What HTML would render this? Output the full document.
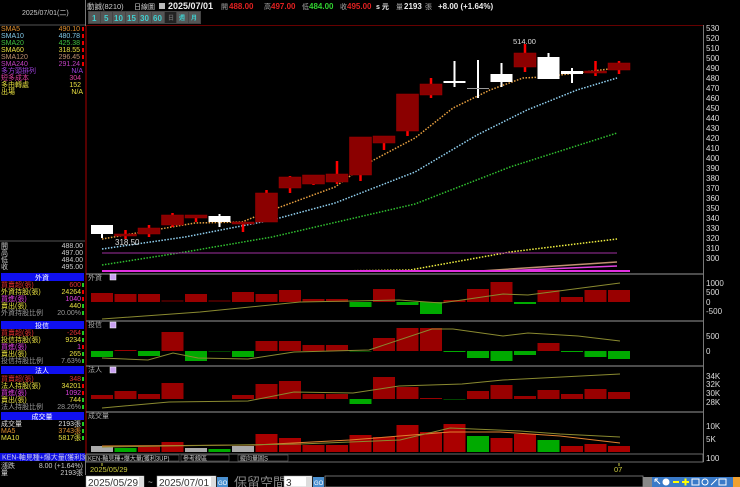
<!DOCTYPE html>
<html><head><meta charset="utf-8"><style>
html,body{margin:0;padding:0;background:#000;width:740px;height:487px;overflow:hidden}
svg{display:block}
text{font-family:"Liberation Sans","Noto Sans CJK TC",sans-serif}
.s{font-size:7px}
.ax{font-size:8px;fill:#ddd}
</style></head><body>
<svg width="740" height="487" viewBox="0 0 740 487" xmlns="http://www.w3.org/2000/svg">
<rect width="740" height="487" fill="#000"/>
<!-- left panel -->
<line x1="0" y1="25" x2="85" y2="25" stroke="#555"/>
<line x1="85.5" y1="0" x2="85.5" y2="475" stroke="#777"/>
<text x="22" y="15" class="s" fill="#ccc" font-family="Liberation Serif">2025/07/01(二)</text>
<g class="s">
<text x="1" y="31" fill="#e09030">SMA5</text><text x="80" y="31" fill="#e09030" text-anchor="end">490.10</text>
<text x="1" y="38" fill="#80c8e8">SMA10</text><text x="80" y="38" fill="#80c8e8" text-anchor="end">480.78</text>
<text x="1" y="45" fill="#40c040">SMA20</text><text x="80" y="45" fill="#40c040" text-anchor="end">425.38</text>
<text x="1" y="52" fill="#e8e040">SMA60</text><text x="80" y="52" fill="#e8e040" text-anchor="end">318.55</text>
<text x="1" y="59" fill="#c09070">SMA120</text><text x="80" y="59" fill="#c09070" text-anchor="end">296.45</text>
<text x="1" y="66" fill="#c040c0">SMA240</text><text x="80" y="66" fill="#c040c0" text-anchor="end">291.24</text>
<text x="1" y="73" fill="#a040e0">多方頭排列</text><text x="83" y="73" fill="#a040e0" text-anchor="end">N/A</text>
<text x="1" y="80" fill="#e040a0">短多成本</text><text x="81" y="80" fill="#e040a0" text-anchor="end">304</text>
<text x="1" y="87" fill="#e8e040">多由轉處</text><text x="81" y="87" fill="#e8e040" text-anchor="end">152</text>
<text x="1" y="94" fill="#e8e040">出場</text><text x="83" y="94" fill="#e8e040" text-anchor="end">N/A</text>
</g>
<g fill="#e00"><rect x="82" y="27" width="2" height="4"/><rect x="82" y="34" width="2" height="4"/><rect x="82" y="41" width="2" height="4"/><rect x="82" y="48" width="2" height="4"/><rect x="82" y="55" width="2" height="4"/><rect x="82" y="62" width="2" height="4"/></g>
<line x1="0" y1="241" x2="85" y2="241" stroke="#555"/>
<g class="s" fill="#ccc">
<text x="1" y="248">開</text><text x="83" y="248" text-anchor="end">488.00</text>
<text x="1" y="255">高</text><text x="83" y="255" text-anchor="end">497.00</text>
<text x="1" y="262">低</text><text x="83" y="262" text-anchor="end">484.00</text>
<text x="1" y="269">收</text><text x="83" y="269" text-anchor="end">495.00</text>
</g>
<g>
<rect x="1" y="273" width="83" height="8" fill="#1010f0"/><text x="42" y="280" class="s" fill="#fff" text-anchor="middle">外資</text>
<rect x="1" y="321" width="83" height="8" fill="#1010f0"/><text x="42" y="328" class="s" fill="#fff" text-anchor="middle">投信</text>
<rect x="1" y="366" width="83" height="8" fill="#1010f0"/><text x="42" y="373" class="s" fill="#fff" text-anchor="middle">法人</text>
<rect x="1" y="412" width="83" height="8" fill="#1010f0"/><text x="42" y="419" class="s" fill="#fff" text-anchor="middle">成交量</text>
</g>
<g class="s">
<text x="1" y="287" fill="#e03030">買賣超(張)</text><text x="81" y="287" fill="#e03030" text-anchor="end">600</text>
<text x="1" y="294" fill="#e8e040">外資持股(張)</text><text x="81" y="294" fill="#e8e040" text-anchor="end">24264</text>
<text x="1" y="301" fill="#e040e0">買進(張)</text><text x="81" y="301" fill="#e040e0" text-anchor="end">1040</text>
<text x="1" y="308" fill="#e8e040">賣出(張)</text><text x="81" y="308" fill="#e8e040" text-anchor="end">440</text>
<text x="1" y="315" fill="#999">外資持股比例</text><text x="81" y="315" fill="#999" text-anchor="end">20.00%</text>
<text x="1" y="335" fill="#e03030">買賣超(張)</text><text x="81" y="335" fill="#e03030" text-anchor="end">-264</text>
<text x="1" y="342" fill="#e8e040">投信持股(張)</text><text x="81" y="342" fill="#e8e040" text-anchor="end">9234</text>
<text x="1" y="349" fill="#e040e0">買進(張)</text><text x="81" y="349" fill="#e040e0" text-anchor="end">1</text>
<text x="1" y="356" fill="#e8e040">賣出(張)</text><text x="81" y="356" fill="#e8e040" text-anchor="end">265</text>
<text x="1" y="363" fill="#999">投信持股比例</text><text x="81" y="363" fill="#999" text-anchor="end">7.63%</text>
<text x="1" y="381" fill="#e03030">買賣超(張)</text><text x="81" y="381" fill="#e03030" text-anchor="end">348</text>
<text x="1" y="388" fill="#e8e040">法人持股(張)</text><text x="81" y="388" fill="#e8e040" text-anchor="end">34201</text>
<text x="1" y="395" fill="#e040e0">買進(張)</text><text x="81" y="395" fill="#e040e0" text-anchor="end">1092</text>
<text x="1" y="402" fill="#e8e040">賣出(張)</text><text x="81" y="402" fill="#e8e040" text-anchor="end">744</text>
<text x="1" y="409" fill="#999">法人持股比例</text><text x="81" y="409" fill="#999" text-anchor="end">28.26%</text>
<text x="1" y="426" fill="#ddd">成交量</text><text x="81" y="426" fill="#ddd" text-anchor="end">2193張</text>
<text x="1" y="433" fill="#e09030">MA5</text><text x="81" y="433" fill="#e09030" text-anchor="end">3743張</text>
<text x="1" y="440" fill="#e8e040">MA10</text><text x="81" y="440" fill="#e8e040" text-anchor="end">5817張</text>
</g>
<g fill="#2c2"><rect x="82" y="283" width="2" height="4"/><rect x="82" y="304" width="2" height="4"/><rect x="82" y="311" width="2" height="4"/><rect x="82" y="331" width="2" height="4"/><rect x="82" y="338" width="2" height="4"/><rect x="82" y="352" width="2" height="4"/><rect x="82" y="359" width="2" height="4"/><rect x="82" y="377" width="2" height="4"/><rect x="82" y="398" width="2" height="4"/><rect x="82" y="405" width="2" height="4"/><rect x="82" y="422" width="2" height="4"/><rect x="82" y="429" width="2" height="4"/><rect x="82" y="436" width="2" height="4"/></g>
<g fill="#e00"><rect x="82" y="290" width="2" height="4"/><rect x="82" y="297" width="2" height="4"/><rect x="82" y="345" width="2" height="4"/><rect x="82" y="384" width="2" height="4"/><rect x="82" y="391" width="2" height="4"/></g>
<rect x="0" y="453" width="85" height="8" fill="#1010e0"/>
<text x="2" y="459.5" class="s" fill="#cce">KEN-軸見種+爆大量(獲利3UP)</text>
<text x="1" y="468" class="s" fill="#ccc">漲跌</text><text x="83" y="468" class="s" fill="#ccc" text-anchor="end">8.00 (+1.64%)</text>
<text x="1" y="475" class="s" fill="#ccc">量</text><text x="83" y="475" class="s" fill="#ccc" text-anchor="end">2193張</text>

<!-- top bar -->
<g font-size="8" font-weight="bold">
<text x="87" y="9" fill="#ccc" font-weight="normal" font-size="7.5">動誠(8210)</text>
<text x="134" y="9" fill="#ccc" font-weight="normal" font-size="7">日線圖</text>
<rect x="159" y="3" width="6" height="6" fill="#bbb"/>
<text x="168" y="9" fill="#eee" font-size="9">2025/07/01</text>
<text x="221" y="9" fill="#aaa" font-weight="normal" font-size="7">開</text><text x="229" y="9" fill="#e02020">488.00</text>
<text x="264" y="9" fill="#aaa" font-weight="normal" font-size="7">高</text><text x="271" y="9" fill="#e02020">497.00</text>
<text x="302" y="9" fill="#aaa" font-weight="normal" font-size="7">低</text><text x="309" y="9" fill="#30d030">484.00</text>
<text x="340" y="9" fill="#aaa" font-weight="normal" font-size="7">收</text><text x="347" y="9" fill="#e02020">495.00</text>
<text x="376" y="9" fill="#eee" font-size="7">s 元</text>
<text x="396" y="9" fill="#aaa" font-weight="normal" font-size="7">量</text><text x="404" y="9" fill="#eee">2193</text>
<text x="425" y="9" fill="#aaa" font-weight="normal" font-size="7">張</text>
<text x="438" y="9" fill="#eee">+8.00 (+1.64%)</text>
</g>
<rect x="88" y="11" width="113" height="13" fill="#444"/>
<g font-size="8" font-weight="bold" fill="#40d0d0">
<rect x="89" y="12" width="11" height="11" fill="#555"/><text x="92" y="21">1</text>
<rect x="101" y="12" width="11" height="11" fill="#555"/><text x="104" y="21">5</text>
<rect x="113" y="12" width="12" height="11" fill="#555"/><text x="114" y="21">10</text>
<rect x="126" y="12" width="12" height="11" fill="#555"/><text x="127" y="21">15</text>
<rect x="139" y="12" width="12" height="11" fill="#555"/><text x="140" y="21">30</text>
<rect x="152" y="12" width="12" height="11" fill="#555"/><text x="153" y="21">60</text>
<rect x="165" y="12" width="11" height="11" fill="#222"/><text x="168" y="20" font-size="6" fill="#666">日</text>
<rect x="177" y="12" width="11" height="11" fill="#555"/><text x="179" y="20" font-size="6">週</text>
<rect x="189" y="12" width="11" height="11" fill="#555"/><text x="191" y="20" font-size="6">月</text>
</g>
<line x1="86" y1="25.5" x2="703" y2="25.5" stroke="#600" stroke-width="1"/>

<line x1="703.5" y1="25" x2="703.5" y2="462" stroke="#777"/>
<line x1="86" y1="26" x2="86" y2="455" stroke="#500" stroke-width="2"/>
<g stroke="#666" stroke-width="1.5">
<line x1="86" y1="274" x2="703" y2="274"/>
<line x1="86" y1="321" x2="703" y2="321"/>
<line x1="86" y1="366" x2="703" y2="366"/>
<line x1="86" y1="412" x2="703" y2="412"/>
</g>
<g class="ax">
<text x="706" y="31">530</text><text x="706" y="41">520</text><text x="706" y="51">510</text><text x="706" y="61">500</text><text x="706" y="71">490</text><text x="706" y="81">480</text><text x="706" y="91">470</text><text x="706" y="101">460</text><text x="706" y="111">450</text><text x="706" y="121">440</text><text x="706" y="131">430</text><text x="706" y="141">420</text><text x="706" y="151">410</text><text x="706" y="161">400</text><text x="706" y="171">390</text><text x="706" y="181">380</text><text x="706" y="191">370</text><text x="706" y="201">360</text><text x="706" y="211">350</text><text x="706" y="221">340</text><text x="706" y="231">330</text><text x="706" y="241">320</text><text x="706" y="251">310</text><text x="706" y="261">300</text>
<text x="706" y="286">1000</text><text x="706" y="295">500</text><text x="706" y="305">0</text><text x="706" y="314">-500</text>
<text x="706" y="339">500</text><text x="706" y="354">0</text>
<text x="706" y="379">34K</text><text x="706" y="387">32K</text><text x="706" y="396">30K</text><text x="706" y="405">28K</text>
<text x="706" y="429">10K</text><text x="706" y="442">5K</text>
<text x="706" y="461">100</text>
</g>

<g fill="none" stroke-width="1.5" stroke-dasharray="1.5 1.5">
<polyline stroke="#e8a040" points="102,239 195,223 242,222 272,210 335,187 368,163 415,138 453,108 490,90 523,78 543,77 577,73 617,68"/>
<polyline stroke="#90d0f0" points="102,249 185,237 272,220 335,203 415,172 477,135 527,110 577,90 617,78"/>
<polyline stroke="#30c030" points="102,265 185,252 272,237 415,204 510,167 617,133"/>
<polyline stroke="#f0f040" points="330,271 410,270 510,252 617,239"/>
</g>
<line x1="102" y1="253" x2="617" y2="253" stroke="#a030a0" stroke-width="1"/>
<polyline fill="none" stroke="#c09070" stroke-width="1.5" points="480,271 617,262"/>
<polyline fill="none" stroke="#e040e0" stroke-width="1.5" points="500,271 617,266"/>
<line x1="102" y1="271" x2="630" y2="271" stroke="#e030e0" stroke-width="2"/>

<g stroke="#f00" stroke-width="2.5">
<line x1="125.5" y1="230" x2="125.5" y2="239"/><line x1="149" y1="225" x2="149" y2="237"/><line x1="172.5" y1="213" x2="172.5" y2="227"/><line x1="196" y1="215" x2="196" y2="222"/><line x1="243" y1="222" x2="243" y2="232"/><line x1="266.5" y1="190" x2="266.5" y2="222"/><line x1="290" y1="176" x2="290" y2="193"/><line x1="313.5" y1="175" x2="313.5" y2="185"/><line x1="337" y1="161" x2="337" y2="184"/><line x1="360.5" y1="137" x2="360.5" y2="181"/><line x1="384" y1="136" x2="384" y2="150"/><line x1="407.5" y1="94" x2="407.5" y2="136"/><line x1="431" y1="78" x2="431" y2="98"/><line x1="525" y1="44" x2="525" y2="72"/><line x1="595.5" y1="61" x2="595.5" y2="76"/><line x1="619" y1="61" x2="619" y2="74"/>
</g>
<g fill="#8b0000" stroke="#a00000" stroke-width="0.5">
<rect x="114.5" y="234" width="22" height="2"/><rect x="138" y="228" width="22" height="6"/><rect x="161.5" y="215" width="22" height="10"/><rect x="185" y="215" width="22" height="3"/><rect x="232" y="222" width="22" height="2"/><rect x="255.5" y="193" width="22" height="29"/><rect x="279" y="177" width="22" height="11"/><rect x="302.5" y="175" width="22" height="9"/><rect x="326" y="174" width="22" height="8"/><rect x="349.5" y="137" width="22" height="38"/><rect x="373" y="136" width="22" height="7"/><rect x="396.5" y="94" width="22" height="37"/><rect x="420" y="84" width="22" height="11"/><rect x="514" y="53" width="22" height="14"/><rect x="584.5" y="71" width="22" height="2"/><rect x="608" y="63" width="22" height="7"/>
</g>
<g stroke="#fff" stroke-width="2">
<line x1="102" y1="225" x2="102" y2="238"/><line x1="219.5" y1="214" x2="219.5" y2="227"/><line x1="454.5" y1="61" x2="454.5" y2="87"/><line x1="478" y1="60" x2="478" y2="98"/><line x1="501.5" y1="63" x2="501.5" y2="87"/><line x1="548.5" y1="53" x2="548.5" y2="79"/><line x1="572" y1="68" x2="572" y2="83"/>
</g>
<g fill="#fff">
<rect x="91" y="225" width="22" height="9"/><rect x="208.5" y="216" width="22" height="6"/><rect x="443.5" y="81" width="22" height="2"/><rect x="467" y="88" width="22" height="1" fill="#999"/><rect x="490.5" y="74" width="22" height="8"/><rect x="537.5" y="57" width="22" height="22"/><rect x="561" y="71" width="22" height="3"/>
</g>
<text x="115" y="245" font-size="8" fill="#ddd" font-family="Liberation Serif">318.50</text>
<text x="513" y="44" font-size="7.5" fill="#ddd">514.00</text>

<g class="s" fill="#aaa">
<text x="88" y="280">外資</text><text x="88" y="327">投信</text><text x="88" y="372">法人</text><text x="88" y="418">成交量</text>
</g>
<g fill="#c8a0f0" stroke="#fff" stroke-width="0.5"><rect x="110" y="274" width="6" height="6"/><rect x="110" y="322" width="6" height="6"/><rect x="110" y="367" width="6" height="6"/></g>

<g fill="#900">
<rect x="91" y="293" width="22" height="9"/><rect x="114.5" y="294" width="22" height="8"/><rect x="138" y="294" width="22" height="8"/><rect x="161.5" y="300" width="22" height="2" fill="#400"/><rect x="185" y="294" width="22" height="8"/><rect x="208.5" y="300" width="22" height="2" fill="#400"/><rect x="232" y="292" width="22" height="10"/><rect x="255.5" y="294" width="22" height="8"/><rect x="279" y="290" width="22" height="12"/><rect x="302.5" y="299" width="22" height="3"/><rect x="326" y="299" width="22" height="3"/><rect x="373" y="289" width="22" height="13"/><rect x="443.5" y="300" width="22" height="2"/><rect x="467" y="289" width="22" height="13"/><rect x="490.5" y="282" width="22" height="20"/><rect x="537.5" y="290" width="22" height="12"/><rect x="561" y="297" width="22" height="5"/><rect x="584.5" y="290" width="22" height="12"/><rect x="608" y="290" width="22" height="12"/>
</g>
<g fill="#0a0"><rect x="349.5" y="302" width="22" height="5"/><rect x="396.5" y="302" width="22" height="3"/><rect x="420" y="302" width="22" height="12"/><rect x="514" y="302" width="22" height="2"/></g>
<polyline fill="none" stroke="#8a8a30" stroke-width="1" points="102,319 200,312 300,302 353,301 399,300 441,303 503,294 528,295 620,283"/>
<g fill="#900">
<rect x="114.5" y="350" width="22" height="1"/><rect x="161.5" y="332" width="22" height="19"/><rect x="255.5" y="341" width="22" height="10"/><rect x="279" y="341" width="22" height="10"/><rect x="302.5" y="345" width="22" height="6"/><rect x="326" y="345" width="22" height="6"/><rect x="373" y="338" width="22" height="13"/><rect x="396.5" y="328" width="22" height="23"/><rect x="420" y="328" width="22" height="23"/><rect x="537.5" y="343" width="22" height="8"/>
</g>
<g fill="#0a0">
<rect x="91" y="351" width="22" height="6"/><rect x="138" y="351" width="22" height="5"/><rect x="185" y="351" width="22" height="10"/><rect x="208.5" y="351" width="22" height="1" fill="#040"/><rect x="232" y="351" width="22" height="6"/><rect x="349.5" y="351" width="22" height="1" fill="#040"/><rect x="443.5" y="351" width="22" height="1"/><rect x="467" y="351" width="22" height="7"/><rect x="490.5" y="351" width="22" height="10"/><rect x="514" y="351" width="22" height="4"/><rect x="561" y="351" width="22" height="1"/><rect x="584.5" y="351" width="22" height="6"/><rect x="608" y="351" width="22" height="8"/>
</g>
<polyline fill="none" stroke="#8a8a30" stroke-width="1" points="102,358 148,360 173,353 198,358 248,359 294,352 369,350 432,329 453,329 503,336 528,333 578,336 620,341"/>
<g fill="#900">
<rect x="91" y="395" width="22" height="4"/><rect x="114.5" y="391" width="22" height="8"/><rect x="138" y="394" width="22" height="5"/><rect x="161.5" y="383" width="22" height="16"/><rect x="232" y="395" width="22" height="4"/><rect x="255.5" y="384" width="22" height="15"/><rect x="279" y="381" width="22" height="18"/><rect x="302.5" y="394" width="22" height="5"/><rect x="326" y="394" width="22" height="5"/><rect x="373" y="377" width="22" height="22"/><rect x="396.5" y="387" width="22" height="12"/><rect x="420" y="398" width="22" height="1"/><rect x="467" y="391" width="22" height="8"/><rect x="490.5" y="385" width="22" height="14"/><rect x="514" y="396" width="22" height="3"/><rect x="537.5" y="390" width="22" height="9"/><rect x="561" y="394" width="22" height="5"/><rect x="584.5" y="389" width="22" height="10"/><rect x="608" y="392" width="22" height="7"/>
</g>
<g fill="#0a0"><rect x="349.5" y="399" width="22" height="5"/><rect x="443.5" y="399" width="22" height="1" fill="#040"/></g>
<polyline fill="none" stroke="#8a8a30" stroke-width="1" points="102,408 169,402 248,401 294,392 353,393 399,386 462,384 503,380 620,374"/>
<g fill="#a00">
<rect x="138" y="446" width="22" height="6"/><rect x="161.5" y="442" width="22" height="10"/><rect x="255.5" y="434" width="22" height="18"/><rect x="279" y="438" width="22" height="14"/><rect x="302.5" y="445" width="22" height="7"/><rect x="326" y="445" width="22" height="7"/><rect x="349.5" y="435" width="22" height="17"/><rect x="373" y="437" width="22" height="15"/><rect x="396.5" y="425" width="22" height="27"/><rect x="420" y="432" width="22" height="20"/><rect x="443.5" y="424" width="22" height="28"/><rect x="490.5" y="438" width="22" height="14"/><rect x="514" y="434" width="22" height="18"/><rect x="561" y="446" width="22" height="6"/><rect x="584.5" y="444" width="22" height="8"/><rect x="608" y="446" width="22" height="6"/>
</g>
<g fill="#0a0"><rect x="114.5" y="448" width="22" height="4"/><rect x="208.5" y="449" width="22" height="3"/><rect x="467" y="436" width="22" height="16"/><rect x="537.5" y="440" width="22" height="12"/></g>
<g fill="#aaa"><rect x="91" y="446" width="22" height="6"/><rect x="185" y="448" width="22" height="4"/><rect x="232" y="446" width="22" height="6"/></g>
<polyline fill="none" stroke="#e08030" stroke-width="1" points="102,446 255,445 350,440 450,432 500,432 560,436 620,443"/>
<polyline fill="none" stroke="#8a8a30" stroke-width="1" points="102,447 300,444 400,440 450,428 520,431 560,434 620,437"/>

<rect x="86" y="454" width="617" height="8" fill="#000" stroke="#888" stroke-width="0.8"/>
<rect x="87" y="455" width="92" height="6" fill="#000" stroke="#777" stroke-width="0.5"/>
<text x="88" y="460.5" font-size="6" fill="#ccc">KEN-軸見種+爆大量(獲利3UP)</text>
<rect x="181" y="455" width="48" height="6" fill="#000" stroke="#777" stroke-width="0.5"/><text x="183" y="460.5" font-size="6" fill="#ccc">參考線區</text>
<rect x="238" y="455" width="50" height="6" fill="#000" stroke="#777" stroke-width="0.5"/><text x="240" y="460.5" font-size="6" fill="#ccc">縱向量圖S</text>
<line x1="102" y1="463" x2="102" y2="466" stroke="#cc4"/>
<line x1="619" y1="463" x2="619" y2="466" stroke="#cc4"/>
<text x="90" y="472" font-size="7.5" fill="#cccc40">2025/05/29</text>
<text x="614" y="472" font-size="7.5" fill="#cccc40">07</text>

<rect x="86" y="476" width="58" height="11" fill="#fff" stroke="#999" stroke-width="0.5"/>
<text x="88" y="486" font-size="10" fill="#333" font-family="Liberation Serif">2025/05/29</text>
<rect x="139" y="477" width="5" height="10" fill="#ddd"/>
<text x="148" y="485" font-size="8" fill="#ccc">~</text>
<rect x="157" y="476" width="59" height="11" fill="#fff" stroke="#999" stroke-width="0.5"/>
<text x="159" y="486" font-size="10" fill="#333" font-family="Liberation Serif">2025/07/01</text>
<rect x="211" y="477" width="5" height="10" fill="#ddd"/>
<rect x="217" y="477" width="11" height="10" fill="#4a90d0"/><text x="218" y="485" font-size="6" fill="#fff">GO</text>
<text x="234" y="487" font-size="13" fill="#888" font-family="Liberation Serif,Noto Serif CJK SC,serif">保留空間</text>
<rect x="284" y="476" width="28" height="11" fill="#fff" stroke="#999" stroke-width="0.5"/>
<text x="286" y="486" font-size="10" fill="#333">3</text>
<rect x="306" y="477" width="6" height="10" fill="#ddd"/>
<rect x="313" y="477" width="11" height="10" fill="#4a90d0"/><text x="314" y="485" font-size="6" fill="#fff">GO</text>
<rect x="325" y="476" width="318" height="11" fill="#000" stroke="#888" stroke-width="0.8"/>
<rect x="643" y="477" width="9" height="10" fill="#888"/>
<rect x="652" y="477" width="81" height="10" fill="#3a7ac8"/>
<g stroke="#fff" stroke-width="1" fill="none">
<path d="M655 479 l5 5 M655 479 h3 M655 479 v3"/>
<circle cx="666" cy="482" r="3" fill="#fff"/>
<line x1="673" y1="482" x2="679" y2="482" stroke="#ff0" stroke-width="2"/>
<path d="M682 482 h7 M685.5 478.5 v7" stroke="#ff0" stroke-width="2"/>
<rect x="692" y="479" width="7" height="6"/>
<circle cx="705" cy="482" r="3"/>
<path d="M711 485 l6 -6"/>
<rect x="719" y="479" width="7" height="6"/>
</g>
<rect x="733" y="477" width="7" height="10" fill="#f0a030"/>
</svg>
</body></html>
